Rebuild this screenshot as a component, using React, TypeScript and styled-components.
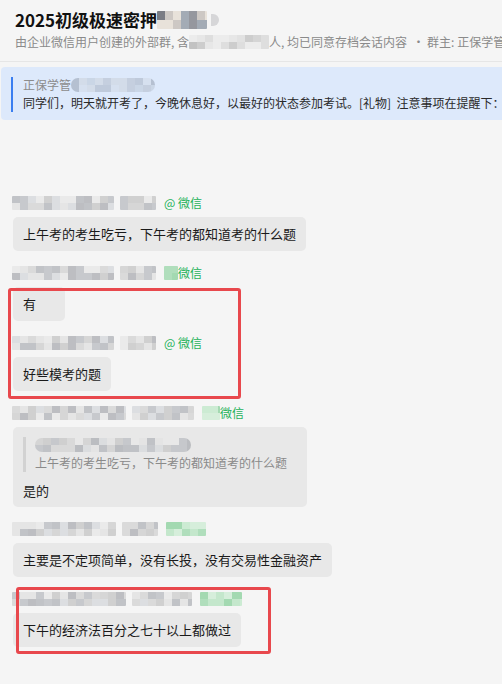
import React from 'react';
import styled, { createGlobalStyle } from 'styled-components';

const palettes: Record<string, string[]> = {
  gray: ['#d8d8d8', '#cdcdcd', '#e4e4e4', '#c3c5c9', '#bcbec3', '#d3d3d3', '#e9e9e9', '#b7b9bd', '#dadcdf'],
  light: ['#e6e6e6', '#dcdcdc', '#d2d2d2', '#ececec', '#c9c9c9', '#bdbdbd', '#e1e1e1'],
  dark: ['#3b3a44', '#6d6f78', '#8b8d95', '#e7e0d8', '#7b7c80', '#9ba4af', '#5f636b', '#c9c4bf'],
  blue: ['#c9d4e4', '#d2dbe8', '#bcc7d8', '#d6e0ee', '#c3cddd', '#b1bccd'],
  green: ['#bfe6c8', '#a9dcb6', '#d3eed9', '#9bd6aa', '#c8ead0'],
};

// pixel mosaic used for the redacted bits of the screenshot
const mosaicBg = (width: number, seed: number, tone: string) => {
  const pal = palettes[tone];
  let s = seed * 9301 + 49297;
  const next = () => {
    s = (s * 9301 + 49297) % 233280;
    return pal[Math.floor((s / 233280) * pal.length)];
  };
  const row = () => {
    const stops: string[] = [];
    for (let x = 0; x < width; x += 8) {
      const c = next();
      stops.push(`${c} ${x}px ${Math.min(x + 8, width)}px`);
    }
    return `linear-gradient(90deg, ${stops.join(', ')})`;
  };
  return `${row()} top / 100% 50% no-repeat, ${row()} bottom / 100% 50% no-repeat`;
};

type Msg = {
  blocks: number[];
  tag?: string;
  tagBlur?: number;
  tagText?: string;
  text?: string;
  quote?: { text: string; reply: string };
};

const messages: Msg[] = [
  { blocks: [102, 36], tag: '@ 微信', text: '上午考的考生吃亏，下午考的都知道考的什么题' },
  { blocks: [102, 36], tagBlur: 14, tagText: '微信', text: '有' },
  { blocks: [102, 36], tag: '@ 微信', text: '好些模考的题' },
  {
    blocks: [114, 62],
    tagBlur: 18,
    tagText: '微信',
    quote: { text: '上午考的考生吃亏，下午考的都知道考的什么题', reply: '是的' },
  },
  { blocks: [104, 36], tagBlur: 40, text: '主要是不定项简单，没有长投，没有交易性金融资产' },
  { blocks: [114, 60], tagBlur: 42, text: '下午的经济法百分之七十以上都做过' },
];

const App: React.FC = () => {
  return (
    <Page>
      <GlobalStyle />
      <Header>
        <Title>
          2025初级极速密押
          <Mosaic $w={50} $h={18} style={{ background: mosaicBg(50, 3, 'dark') }} />
          <Dot />
        </Title>
        <Subtitle>
          由企业微信用户创建的外部群, 含
          <Mosaic $w={80} $h={14} style={{ background: mosaicBg(80, 7, 'light') }} />
          人, 均已同意存档会话内容&nbsp;&nbsp;· 群主: 正保学管理员小助手
        </Subtitle>
      </Header>

      <Pinned>
        <PinnedBody>
          <PinnedName>
            正保学管
            <Mosaic $w={84} $h={14} $round style={{ background: mosaicBg(84, 11, 'blue') }} />
          </PinnedName>
          <PinnedText>
            同学们，明天就开考了，今晚休息好，以最好的状态参加考试。[礼物]&nbsp;&nbsp;注意事项在提醒下：
          </PinnedText>
        </PinnedBody>
      </Pinned>

      <ChatList>
        {messages.map((m, i) => (
          <Message key={i}>
            <NameRow>
              {m.blocks.map((w, j) => (
                <Mosaic key={j} $w={w} $h={14} style={{ background: mosaicBg(w, i * 5 + j + 1, 'gray') }} />
              ))}
              <TagGroup>
                {m.tagBlur ? (
                  <Mosaic $w={m.tagBlur} $h={14} style={{ background: mosaicBg(m.tagBlur, i + 20, 'green') }} />
                ) : null}
                {m.tag ? <Tag>{m.tag}</Tag> : null}
                {m.tagText ? <Tag>{m.tagText}</Tag> : null}
              </TagGroup>
            </NameRow>
            {m.quote ? (
              <QuoteBubble>
                <Quote>
                  <QuoteName>
                    <Mosaic $w={156} $h={14} $round style={{ background: mosaicBg(156, 31, 'gray') }} />
                  </QuoteName>
                  <QuoteText>{m.quote.text}</QuoteText>
                </Quote>
                <Reply>{m.quote.reply}</Reply>
              </QuoteBubble>
            ) : (
              <Bubble>{m.text}</Bubble>
            )}
          </Message>
        ))}
        <RedBox $top={93} $left={8} $w={233} $h={111} />
        <RedBox $top={392} $left={16} $w={255} $h={67} />
      </ChatList>
    </Page>
  );
};

export default App;

const GlobalStyle = createGlobalStyle`
  html, body {
    margin: 0;
    padding: 0;
    background: #f5f5f5;
    overflow: hidden;
  }
  body {
    font-family: "Noto Sans CJK SC", "Noto Sans", sans-serif;
    color: #1f1f1f;
  }
`;

const Page = styled.div`
  width: 502px;
  height: 684px;
  background: #f5f5f5;
  overflow: hidden;
`;

const Header = styled.div`
  padding: 8px 0 10px 15px;
  border-bottom: 1px solid #e6e6e6;
`;

const Title = styled.div`
  display: flex;
  align-items: center;
  font-size: 17px;
  font-weight: 700;
  line-height: 24px;
  color: #111;
  white-space: nowrap;
`;

const Dot = styled.span`
  width: 8px;
  height: 12px;
  margin-left: 4px;
  border-radius: 0 6px 6px 0;
  background: #d6d6d8;
`;

const Subtitle = styled.div`
  display: flex;
  align-items: center;
  margin-top: 1px;
  font-size: 12px;
  line-height: 18px;
  color: #8a8a8a;
  white-space: nowrap;
`;

const Mosaic = styled.span<{ $w: number; $h: number; $round?: boolean }>`
  display: inline-block;
  flex: none;
  width: ${(p) => p.$w}px;
  height: ${(p) => p.$h}px;
  border-radius: ${(p) => (p.$round ? '7px' : '1px')};
  opacity: 0.9;
`;

const Pinned = styled.div`
  margin: 5px 0 0 1px;
  width: 520px;
  padding: 10px 0 8px 10px;
  background: #dde9fb;
  border-radius: 4px;
  box-sizing: border-box;
`;

const PinnedBody = styled.div`
  border-left: 2px solid #3a7ef0;
  padding-left: 10px;
`;

const PinnedName = styled.div`
  display: flex;
  align-items: center;
  font-size: 12px;
  line-height: 16px;
  color: #8c8c8c;
  white-space: nowrap;
`;

const PinnedText = styled.div`
  margin-top: 1px;
  font-size: 12px;
  line-height: 18px;
  color: #2a2a2a;
  white-space: nowrap;
`;

const ChatList = styled.div`
  position: relative;
  margin-top: 75px;
  padding-left: 13px;
  display: flex;
  flex-direction: column;
  gap: 14px;
`;

const Message = styled.div`
  display: flex;
  flex-direction: column;
  align-items: flex-start;
  gap: 6px;
`;

const NameRow = styled.div`
  display: flex;
  align-items: center;
  gap: 6px;
  height: 16px;
  margin-left: -1px;
  font-size: 12px;
  line-height: 16px;
  color: #9a9a9a;
`;

const TagGroup = styled.span`
  display: flex;
  align-items: center;
  margin-left: 2px;
`;

const Tag = styled.span`
  color: #1fb25a;
  white-space: nowrap;
`;

const Bubble = styled.div`
  min-width: 32px;
  padding: 7px 10px;
  background: #e8e8e8;
  border-radius: 5px;
  font-size: 13px;
  line-height: 20px;
  color: #1a1a1a;
  white-space: nowrap;
`;

const QuoteBubble = styled.div`
  padding: 10px 20px 6px 10px;
  background: #e8e8e8;
  border-radius: 5px;
`;

const Quote = styled.div`
  border-left: 3px solid #d2d2d2;
  padding-left: 9px;
`;

const QuoteName = styled.div`
  display: flex;
  align-items: center;
  height: 16px;
`;

const QuoteText = styled.div`
  font-size: 12px;
  line-height: 19px;
  color: #8a8a8a;
  white-space: nowrap;
`;

const Reply = styled.div`
  margin-top: 9px;
  font-size: 13px;
  line-height: 20px;
  color: #1a1a1a;
`;

const RedBox = styled.div<{ $top: number; $left: number; $w: number; $h: number }>`
  position: absolute;
  top: ${(p) => p.$top}px;
  left: ${(p) => p.$left}px;
  width: ${(p) => p.$w}px;
  height: ${(p) => p.$h}px;
  border: 3px solid #e8484d;
  border-radius: 3px;
  box-sizing: border-box;
  pointer-events: none;
`;
